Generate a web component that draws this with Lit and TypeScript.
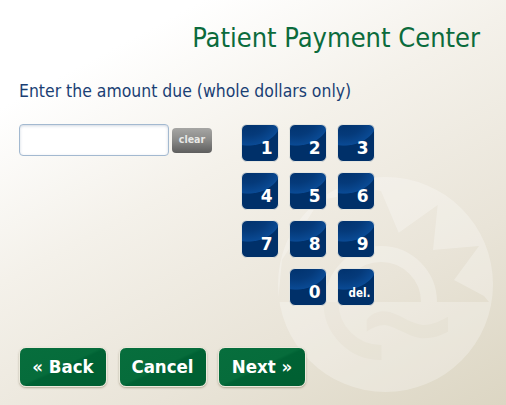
import { LitElement, html, css, svg } from "lit";
import { customElement } from "lit/decorators.js";

const KEYS = ["1", "2", "3", "4", "5", "6", "7", "8", "9", "", "0", "del."];

@customElement("app-root")
export class AppRoot extends LitElement {
  static styles = css`
    :host {
      display: block;
      position: relative;
      width: 506px;
      height: 405px;
      overflow: hidden;
      background: linear-gradient(152deg, #ffffff 16%, #f4f1ea 42%, #e9e4d8 72%, #dcd6c3 100%);
      font-family: "DejaVu Sans", Tahoma, sans-serif;
      font-stretch: condensed;
    }
    .mark {
      position: absolute;
      left: 0;
      top: 0;
      width: 506px;
      height: 405px;
    }
    .page {
      position: relative;
      box-sizing: border-box;
      height: 405px;
      display: flex;
      flex-direction: column;
      padding: 21px 26px 18px 19px;
    }
    h1 {
      margin: 0;
      font-size: 27px;
      line-height: 33px;
      font-weight: 400;
      color: #0b6b3c;
      text-align: right;
    }
    .prompt {
      margin: 25px 0 0;
      font-size: 17.45px;
      line-height: 24px;
      font-weight: 400;
      color: #1a3f74;
    }
    .row {
      display: flex;
      margin-top: 21px;
      align-items: flex-start;
    }
    .entry {
      display: flex;
      align-items: center;
      gap: 3px;
      width: 221.5px;
    }
    .field {
      box-sizing: border-box;
      width: 150px;
      height: 32px;
      background: #fff;
      border: 1px solid #a3b9d0;
      border-radius: 4px;
      box-shadow: inset 0 1px 3px rgba(120, 140, 170, 0.35);
    }
    .clear {
      box-sizing: border-box;
      width: 40px;
      height: 25px;
      padding: 0 0 3px;
      border: 0;
      border-radius: 4px;
      background: linear-gradient(#a6a6a4, #8c8c8a 45%, #5e5e5e);
      color: #e9e9e6;
      font: inherit;
      font-size: 10.5px;
      font-weight: 700;
      font-stretch: condensed;
    }
    .keypad {
      display: grid;
      grid-template-columns: repeat(3, 38px);
      grid-auto-rows: 38px;
      column-gap: 10px;
      row-gap: 10.33px;
      margin-top: -0.5px;
    }
    .key {
      box-sizing: border-box;
      display: flex;
      align-items: flex-end;
      justify-content: flex-end;
      padding: 0 5px 2px 0;
      border: 1px solid #e6e6e0;
      border-radius: 6px;
      color: #fff;
      font: inherit;
      font-size: 17px;
      font-weight: 700;
      font-stretch: normal;
      line-height: 22px;
      background:
        radial-gradient(ellipse 34px 27px at 6px -6px, #003069 0%, #053a7a 60%, #0a4a94 97%, rgba(10, 74, 148, 0) 100%),
        #003069;
    }
    .key.small {
      font-size: 11.5px;
      padding: 0 3px 3px 0;
      line-height: 18px;
      font-stretch: condensed;
    }
    .actions {
      display: flex;
      gap: 11.5px;
      margin-top: auto;
    }
    .act {
      box-sizing: border-box;
      width: 88px;
      height: 40px;
      padding: 0 0 1px;
      border: 1px solid #ece9dc;
      border-radius: 7px;
      background: linear-gradient(155deg, #076e3d 0%, #066c3b 48%, #006234 52%, #005f31 100%);
      box-shadow: 0 1px 2px rgba(120, 110, 80, 0.5);
      color: #fff;
      font: inherit;
      font-size: 18.5px;
      font-weight: 700;
      font-stretch: condensed;
    }
  `;

  private mark() {
    return svg`
      <defs>
        <mask id="cut">
          <circle cx="385.5" cy="284.5" r="107.5" fill="#fff" />
          <path fill="#000" d="M376 190 L381 191 L398.7 232.7 L437.7 205 L433 250 L479 246 L454 280 L484 296 L489 302 L278 302 L282 260 L320 200 Z" />
          <path fill="none" stroke="#fff" stroke-width="16" d="M333 302 A48 48 0 0 1 429 302" />
          <path fill="none" stroke="#777" stroke-width="15" d="M331 302 A50 50 0 0 0 381.5 352.5" />
          <path fill="#777" d="M366.7 320 C372 312 382 310 390 312 C402 316 412 324 423 325 C433 325 442 320 448 316.7 L448 331.7 C440 336 430 339 420 338 C408 336 396 327 385 325 C378 325 372 328 366.7 331.7 Z" />
        </mask>
      </defs>
      <rect x="270" y="170" width="236" height="235" fill="#fff" fill-opacity="0.27" mask="url(#cut)" />
    `;
  }

  render() {
    return html`
      <svg class="mark" viewBox="0 0 506 405" aria-hidden="true">${this.mark()}</svg>
      <div class="page">
        <h1>Patient Payment Center</h1>
        <p class="prompt">Enter the amount due (whole dollars only)</p>
        <div class="row">
          <div class="entry">
            <div class="field"></div>
            <button class="clear">clear</button>
          </div>
          <div class="keypad">
            ${KEYS.map((k) =>
              k
                ? html`<button class="key ${k.length > 1 ? "small" : ""}">${k}</button>`
                : html`<span></span>`
            )}
          </div>
        </div>
        <div class="actions">
          <button class="act">« Back</button>
          <button class="act">Cancel</button>
          <button class="act">Next »</button>
        </div>
      </div>
    `;
  }
}
